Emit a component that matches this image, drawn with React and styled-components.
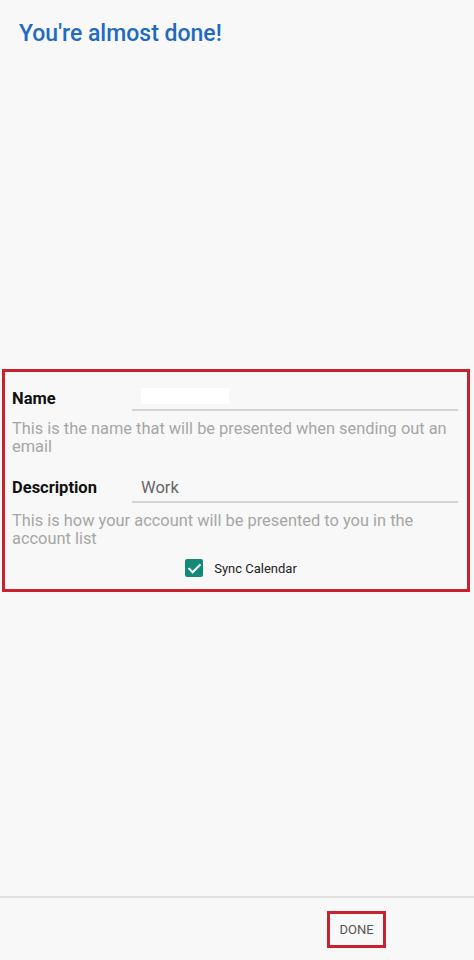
import styled, { createGlobalStyle } from 'styled-components';

const GlobalStyle = createGlobalStyle`
  html, body {
    margin: 0;
    padding: 0;
    background: #f8f8f8;
  }
  body {
    font-family: Roboto, "Noto Sans", "Liberation Sans", sans-serif;
  }
`;

export default function App() {
  return (
    <>
      <GlobalStyle />
      <Page>
        <Content>
          <Title>You're almost done!</Title>
          <FormBox>
            <Row>
              <Label>Name</Label>
              <Field>
                <Redacted />
              </Field>
            </Row>
            <Help>This is the name that will be presented when sending out an email</Help>
            <Row $spaced>
              <Label>Description</Label>
              <Field>Work</Field>
            </Row>
            <Help>This is how your account will be presented to you in the account list</Help>
            <CheckRow>
              <CheckBox>
                <svg width="15" height="15" viewBox="0 0 24 24" fill="none">
                  <path d="M3.5 12.5l5.5 5.5L20.5 6.5" stroke="#fff" strokeWidth="3.2" strokeLinecap="square" />
                </svg>
              </CheckBox>
              <CheckLabel>Sync Calendar</CheckLabel>
            </CheckRow>
          </FormBox>
        </Content>
        <Footer>
          <DoneButton type="button">DONE</DoneButton>
        </Footer>
      </Page>
    </>
  );
}

const Page = styled.div`
  height: 960px;
  display: flex;
  flex-direction: column;
  background: #f8f8f8;
`;

const Content = styled.main`
  flex: 1;
  display: flex;
  flex-direction: column;
`;

const Title = styled.h1`
  margin: 20px 0 0 19px;
  font-size: 23px;
  line-height: 28px;
  font-weight: 500;
  color: #1e6bbf;
`;

const FormBox = styled.section`
  margin: 321px 4px 0 2px;
  border: 3px solid #c8222f;
  padding: 8px 9px 12px 7px;
  display: flex;
  flex-direction: column;
`;

const Row = styled.div`
  display: flex;
  align-items: baseline;
  margin-top: ${p => (p.$spaced ? '16px' : '0')};
`;

const Label = styled.div`
  width: 120px;
  flex-shrink: 0;
  font-size: 16.5px;
  font-weight: 700;
  color: #111;
`;

const Field = styled.div`
  flex: 1;
  height: 19px;
  padding: 6px 9px 4px;
  font-size: 16.5px;
  line-height: 19px;
  color: #666;
  border-bottom: 2px solid #d4d4d4;
  display: flex;
  align-items: center;
`;

const Redacted = styled.span`
  display: block;
  width: 88px;
  height: 16px;
  background: #ffffff;
`;

const Help = styled.p`
  margin: 9px 0 0;
  font-size: 16.4px;
  line-height: 18px;
  color: #a6a6a6;
`;

const CheckRow = styled.div`
  display: flex;
  align-items: center;
  justify-content: center;
  gap: 11px;
  margin-top: 11px;
  padding-left: 12px;
`;

const CheckBox = styled.span`
  width: 18px;
  height: 18px;
  border-radius: 2px;
  background: #14897a;
  display: flex;
  align-items: center;
  justify-content: center;
`;

const CheckLabel = styled.span`
  font-size: 13px;
  color: #222;
`;

const Footer = styled.footer`
  border-top: 2px solid #e0e0e0;
  height: 64px;
  display: flex;
  justify-content: flex-end;
  align-items: flex-start;
  padding: 13px 88px 0 0;
  box-sizing: border-box;
`;

const DoneButton = styled.button`
  width: 59px;
  height: 37px;
  border: 3px solid #c8222f;
  background: transparent;
  font-family: Roboto, "Liberation Sans", sans-serif;
  font-size: 13px;
  color: #555;
  padding: 0;
`;
